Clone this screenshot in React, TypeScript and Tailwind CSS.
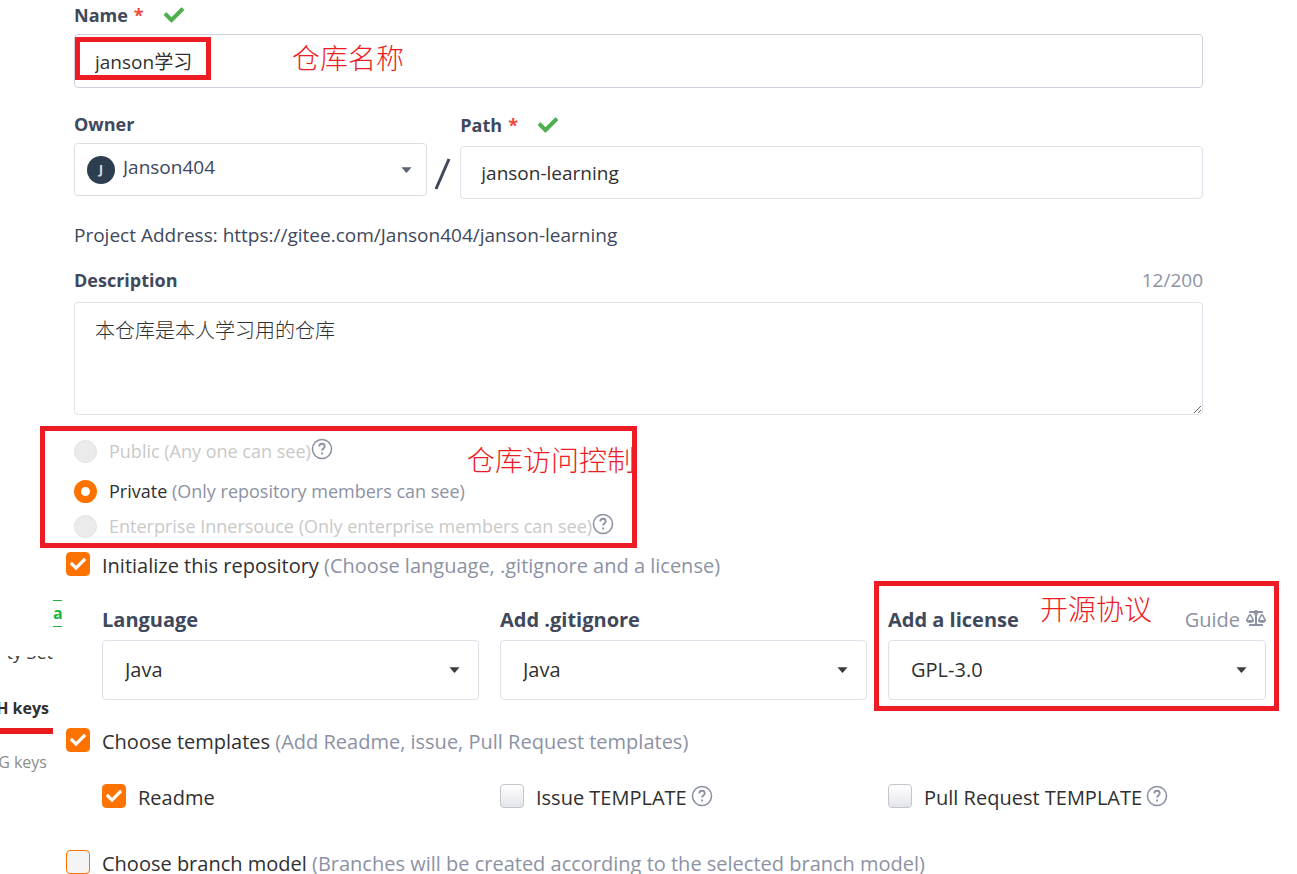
import type { ReactNode } from "react";
import { FaBalanceScale, FaCheck } from "react-icons/fa";

function HelpIcon() {
  return (
    <svg viewBox="0 0 24 24" className="mb-1 size-[22px] shrink-0 text-[#8c92a4]" fill="none" stroke="currentColor" strokeWidth="2" aria-hidden="true">
      <circle cx="12" cy="12" r="10.4" strokeWidth="1.7" />
      <path d="M9 9.2a3 3 0 0 1 6 .2c0 1.9-2.9 2.3-2.9 4.2" />
      <path d="M12.1 15.8v2.2" />
    </svg>
  );
}

function Caret({ className }: { className: string }) {
  return (
    <svg viewBox="0 0 12 6" className={`h-[6px] w-[11px] shrink-0 ${className}`} fill="currentColor" aria-hidden="true">
      <path d="M0.5 0h11L6.6 5.6a.8.8 0 0 1-1.2 0z" />
    </svg>
  );
}

function FieldLabel({ htmlFor, children, valid }: { htmlFor: string; children: ReactNode; valid?: boolean }) {
  return (
    <div className="flex h-7 items-center">
      <label htmlFor={htmlFor} className="font-bold text-[#40485b]">
        {children}
        {valid && <span className="ml-1.5 text-[#f4483a]">*</span>}
      </label>
      {valid && <FaCheck className="ml-5 size-5 text-[#4caf50]" />}
    </div>
  );
}

type VisibilityProps = { id: string; title: string; hint: string; disabled?: boolean; checked?: boolean; help?: boolean };

function VisibilityOption({ id, title, hint, disabled, checked, help }: VisibilityProps) {
  return (
    <div className="flex items-center">
      <input
        id={id}
        type="radio"
        name="visibility"
        disabled={disabled}
        defaultChecked={checked}
        className="size-[23px] shrink-0 appearance-none rounded-full border border-[#e2e2e2] bg-white checked:border-[7px] checked:border-[#fe7300] disabled:bg-[#ebebeb]"
      />
      <label htmlFor={id} className={disabled ? "ml-3 text-[#c9c9c9]" : "ml-3 text-[#303030]"}>
        {title} <span className={disabled ? "" : "text-[#8c92a4]"}>{hint}</span>
      </label>
      {help && <HelpIcon />}
    </div>
  );
}

type CheckProps = { id: string; title: string; hint?: string; checked?: boolean; help?: boolean; focused?: boolean };

function CheckOption({ id, title, hint, checked, help, focused }: CheckProps) {
  return (
    <div className="flex items-center">
      <span className="mb-1 grid size-6 shrink-0">
        <input
          id={id}
          type="checkbox"
          defaultChecked={checked}
          className={
            focused
              ? "peer col-start-1 row-start-1 size-6 appearance-none rounded border border-[#fe7300] bg-[#f4f4f4] checked:bg-[#fe7300]"
              : "peer col-start-1 row-start-1 size-6 appearance-none rounded border border-[#c3c5cc] bg-linear-to-b from-white to-[#e4e5ea] checked:border-[#fe7300] checked:from-[#fe7300] checked:to-[#fe7300]"
          }
        />
        <FaCheck className="pointer-events-none invisible col-start-1 row-start-1 size-4 place-self-center text-white peer-checked:visible" />
      </span>
      <label htmlFor={id} className="ml-3 whitespace-nowrap text-[#303030]">
        {title} {hint && <span className="text-[#8c92a4]">{hint}</span>}
      </label>
      {help && <span className="ml-1"><HelpIcon /></span>}
    </div>
  );
}

function SelectBox({ id, value }: { id: string; value: string }) {
  return (
    <div className="flex h-[60px] items-center rounded border border-[#dfe1ea] pr-[18px] pl-[22px]">
      <select id={id} defaultValue={value} className="h-full min-w-0 flex-1 appearance-none bg-transparent text-[#303030] outline-none">
        <option>{value}</option>
      </select>
      <Caret className="text-[#3c3c3c]" />
    </div>
  );
}

function Note({ className, children }: { className: string; children: ReactNode }) {
  return (
    <span className={`pointer-events-none absolute font-['Noto_Sans_CJK_SC',sans-serif] text-[28px] leading-8 font-light whitespace-nowrap text-[#ed1c24] ${className}`}>
      {children}
    </span>
  );
}

export default function App() {
  return (
    <main className="h-screen overflow-hidden bg-white pt-px font-['Open_Sans','Noto_Sans_CJK_SC',sans-serif] text-lg leading-7 text-[#40485b]">
      <form>
        <section className="mr-[94px] ml-[74px]">
          <FieldLabel htmlFor="name" valid>Name</FieldLabel>
          <div className="relative mt-[5px]">
            <input id="name" defaultValue="janson学习" className="block h-[54px] w-full rounded border border-[#cfd0db] px-5 text-[19px] text-[#303030] outline-none" />
            <div className="pointer-events-none absolute top-[3px] left-px h-[43px] w-[136px] border-[5px] border-[#ed1c24]" />
            <Note className="top-[7px] left-[218px]">仓库名称</Note>
          </div>

          <div className="mt-[22px] grid grid-cols-[353fr_33px_742fr]">
            <div>
              <FieldLabel htmlFor="owner">Owner</FieldLabel>
              <div className="mt-[5px] flex h-[53px] items-center rounded-sm border border-[#dce0e6] pr-[14px] pl-3">
                <span className="grid size-7 shrink-0 place-items-center rounded-full bg-[#2c3e50] text-xs font-bold text-[#dfe3e8]">J</span>
                <select id="owner" defaultValue="Janson404" className="ml-2 h-full min-w-0 flex-1 appearance-none bg-transparent pb-1.5 text-[19px] outline-none">
                  <option>Janson404</option>
                </select>
                <Caret className="text-[#5d6574]" />
              </div>
            </div>
            <svg viewBox="0 0 33 32" className="mt-12 h-8 w-[33px]" aria-hidden="true">
              <path d="M9 31 22 1" stroke="#40485b" strokeWidth="3" />
            </svg>
            <div className="pt-px">
              <FieldLabel htmlFor="path" valid>Path</FieldLabel>
              <input id="path" defaultValue="janson-learning" className="mt-[7px] block h-[53px] w-full rounded border border-[#dfe1ea] px-5 text-[19px] text-[#303030] outline-none" />
            </div>
          </div>

          <p className="mt-[22px] text-[19px]">Project Address: https://gitee.com/Janson404/janson-learning</p>

          <div className="mt-[17px] flex items-center justify-between">
            <FieldLabel htmlFor="description">Description</FieldLabel>
            <span className="text-[19px] text-[#8c92a4]">12/200</span>
          </div>
          <textarea
            id="description"
            defaultValue="本仓库是本人学习用的仓库"
            className="mt-2 block h-[113px] w-full resize rounded border border-[#dfe1ea] px-5 pt-[14px] text-[20px] font-light text-[#303030] outline-none"
          />

          <fieldset className="relative mt-[22px] flex flex-col gap-y-[7px]">
            <VisibilityOption id="public" title="Public" hint="(Any one can see)" disabled help />
            <div className="pt-[5px]">
              <VisibilityOption id="private" title="Private" hint="(Only repository members can see)" checked />
            </div>
            <VisibilityOption id="innersource" title="Enterprise Innersouce" hint="(Only enterprise members can see)" disabled help />
            <div className="pointer-events-none absolute top-[-11px] left-[-34px] h-[122px] w-[597px] border-[5px] border-[#ed1c24]" />
            <Note className="top-1.5 left-[393px]">仓库访问控制</Note>
          </fieldset>
        </section>

        <div className="mt-3 flex text-[20px]">
          <aside className="mt-12 w-[62px] shrink-0 text-base leading-6">
            <div className="ml-[53px] h-[27px] w-[9px] overflow-hidden border-y border-[#1db440] font-bold text-[#1db440]">a</div>
            <div className="mt-[29px] flex h-2 w-[53px] items-end justify-end overflow-hidden text-lg leading-6 whitespace-nowrap text-[#404040]">ty Set</div>
            <div className="mt-8 flex h-[38px] w-[53px] justify-end overflow-hidden border-b-[6px] border-[#e81c1c] pr-1 font-bold whitespace-nowrap text-[#303030]">H keys</div>
            <div className="mt-4 flex w-[53px] justify-end overflow-hidden pr-1.5 whitespace-nowrap text-[#8c8c8c]">G keys</div>
          </aside>

          <section className="mr-[31px] ml-1 min-w-0 flex-1">
            <CheckOption id="init" title="Initialize this repository" hint="(Choose language, .gitignore and a license)" checked />
            <div className="mt-[26px] ml-9 grid grid-cols-[377fr_367fr_378fr] gap-x-[21px]">
              <div>
                <FieldLabel htmlFor="language">Language</FieldLabel>
                <div className="mt-[6px]"><SelectBox id="language" value="Java" /></div>
              </div>
              <div>
                <FieldLabel htmlFor="gitignore">Add .gitignore</FieldLabel>
                <div className="mt-[6px]"><SelectBox id="gitignore" value="Java" /></div>
              </div>
              <div className="relative">
                <div className="flex items-center justify-between">
                  <FieldLabel htmlFor="license">Add a license</FieldLabel>
                  <a href="#guide" className="flex items-center gap-1.5 text-[#8c92a4]">
                    Guide <FaBalanceScale className="mb-1 size-5" />
                  </a>
                </div>
                <div className="mt-[6px]"><SelectBox id="license" value="GPL-3.0" /></div>
                <div className="pointer-events-none absolute top-[-25px] right-[-13px] left-[-14px] h-[130px] border-[5px] border-[#ed1c24]" />
                <Note className="top-[-14px] left-[152px]">开源协议</Note>
              </div>
            </div>

            <div className="mt-7">
              <CheckOption id="templates" title="Choose templates" hint="(Add Readme, issue, Pull Request templates)" checked />
            </div>
            <div className="mt-7 ml-9 grid grid-cols-[377fr_367fr_378fr] gap-x-[21px]">
              <CheckOption id="readme" title="Readme" checked />
              <CheckOption id="issue" title="Issue TEMPLATE" help />
              <CheckOption id="pull-request" title="Pull Request TEMPLATE" help />
            </div>
            <div className="mt-[38px]">
              <CheckOption id="branch" title="Choose branch model" hint="(Branches will be created according to the selected branch model)" focused />
            </div>
          </section>
        </div>
      </form>
    </main>
  );
}
